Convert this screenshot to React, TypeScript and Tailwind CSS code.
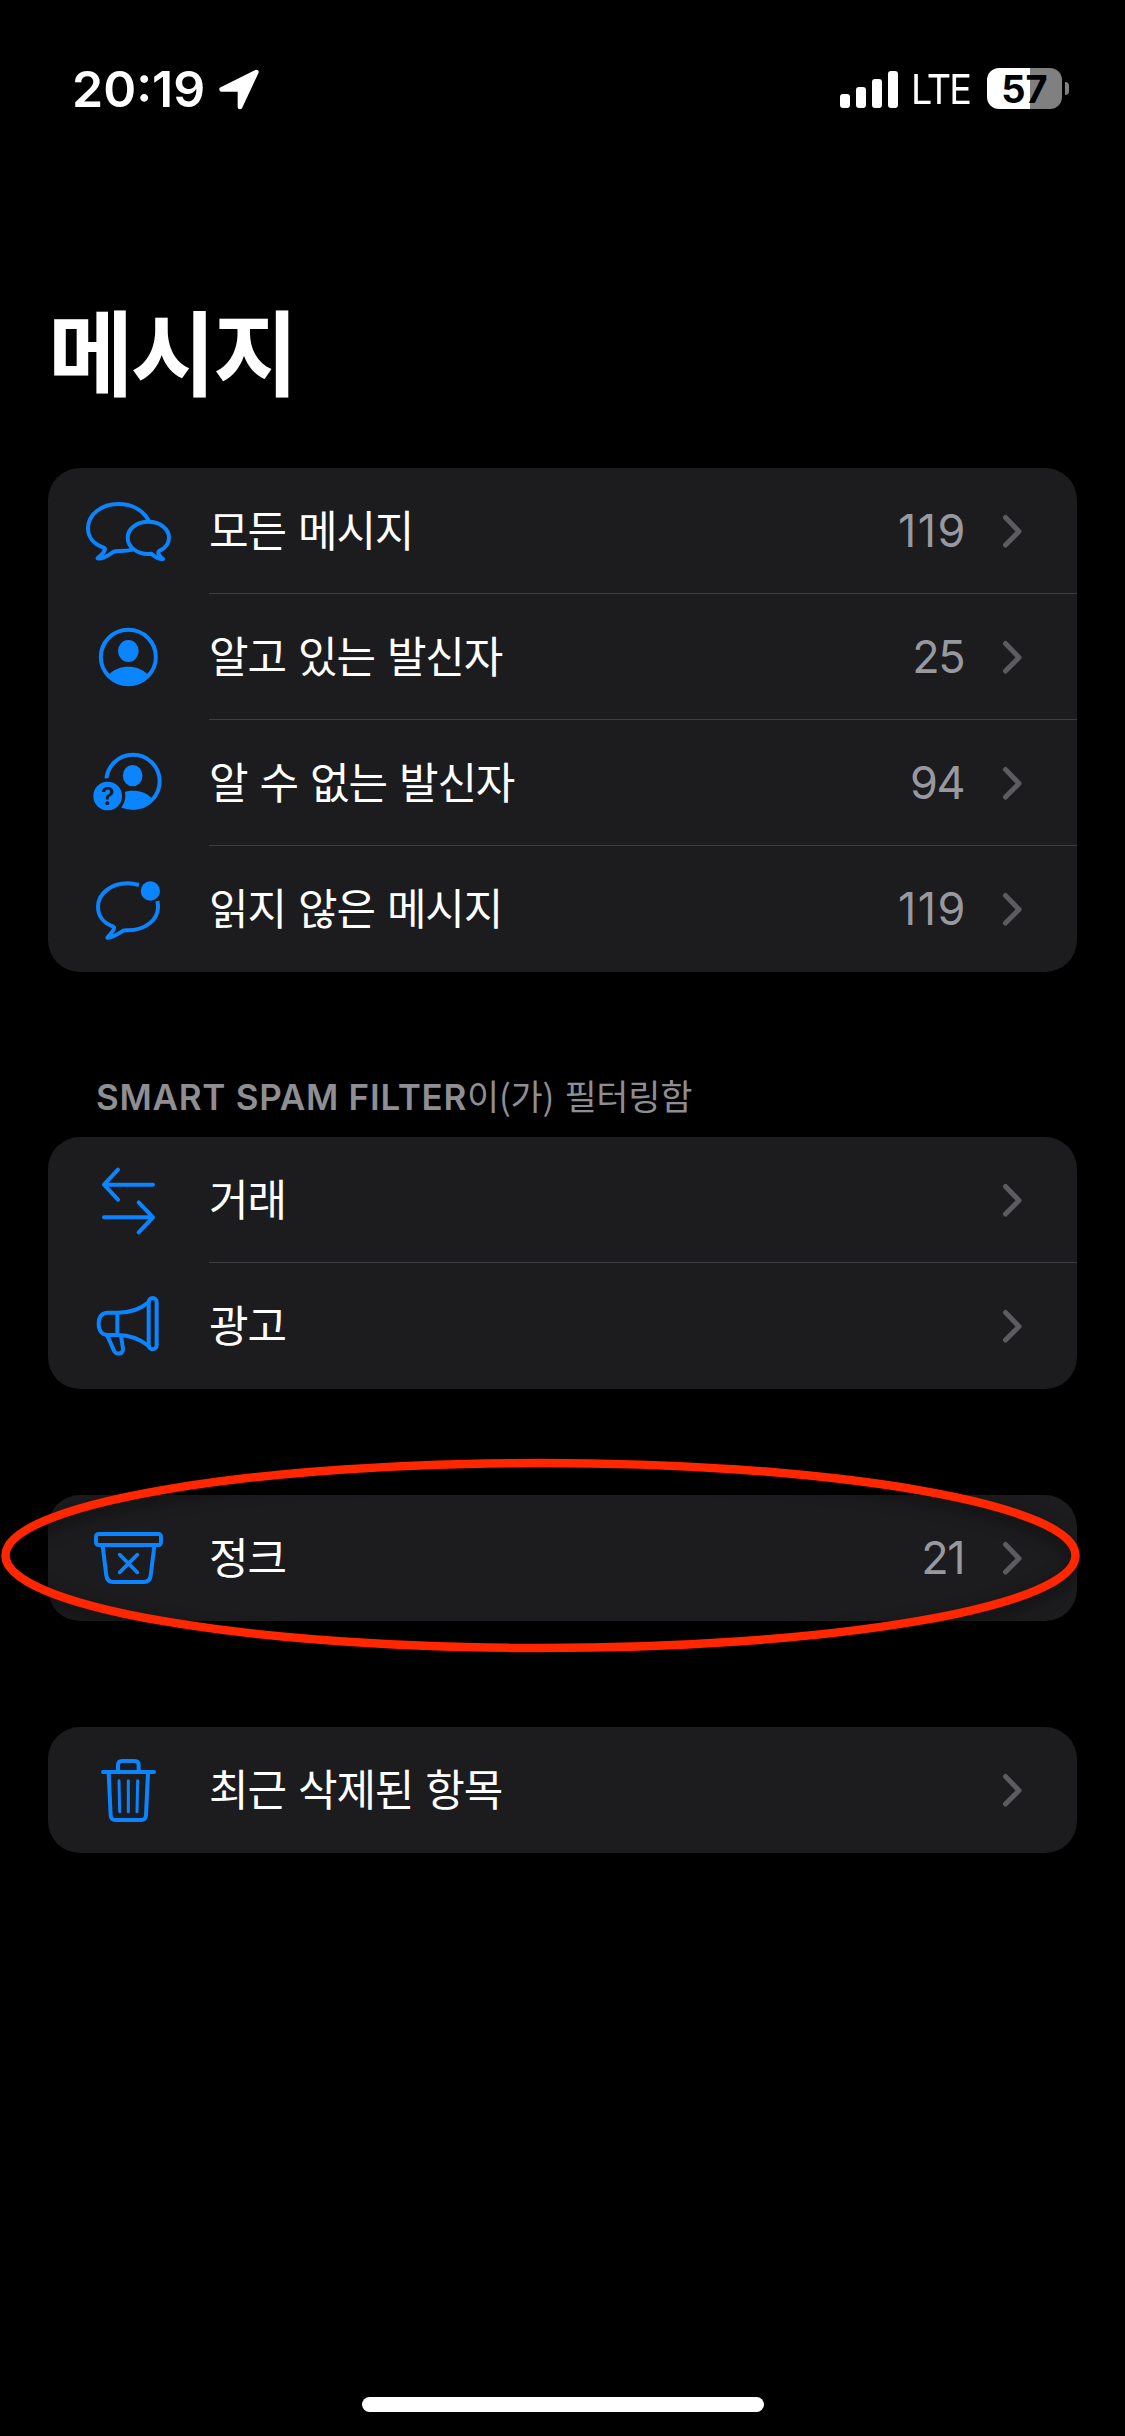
import React from 'react';

const MessagesIcon = () => (
  <g>
    <path d="M250 156C233 126 200 108 160 108C109 108 69 140 69 181C69 207 86 229 116 239C124 242 118 250 111 259L98 271C112 275 136 258 146 251Q150 249 160 249Q182 250 203 245" />
    <path d="M258 257C268 265 282 275 294 273Q288 269 281 258C278 253 280 251 284 248C301 240 312 226 312 209C312 182 284 161 250 161S188 182 188 209S216 258 250 258Z" />
  </g>
);

const KnownIcon = () => (
  <g>
    <ellipse cx="190" cy="189" rx="82.5" ry="81.5" />
    <ellipse cx="190" cy="171" rx="31" ry="33" fill="currentColor" stroke="none" />
    <path d="M133 240C147 226 167 218 190 218S233 226 247 240C235 258 215 271 190 271S145 258 133 240Z" fill="currentColor" stroke="none" />
  </g>
);

const UnknownIcon = () => (
  <g>
    <circle cx="204" cy="184" r="80" />
    <ellipse cx="203" cy="167" rx="29.5" ry="32" fill="currentColor" stroke="none" />
    <path d="M150 233C164 219 182 212 204 212S245 219 259 234C247 254 228 266 204 266S162 254 150 233Z" fill="currentColor" stroke="none" />
    <circle cx="128" cy="228" r="53" fill="#1c1c1e" stroke="none" />
    <circle cx="128" cy="228" r="43" fill="currentColor" stroke="none" />
    <text x="129" y="255" textAnchor="middle" fontSize="74" fontWeight="600" fontFamily="Inter, sans-serif" fill="#1c1c1e" stroke="none">?</text>
  </g>
);

const UnreadIcon = () => (
  <g>
    <path strokeLinecap="butt" d="M222 117C211 114 200 112 189 112C138 112 99 143 99 183C99 209 115 231 143 241C150 244 147 250 142 257L127 275C142 276 163 262 175 254Q180 252 189 253C240 253 279 222 279 183Q279 174 277 165" />
    <circle cx="256" cy="135" r="29" fill="currentColor" stroke="none" />
  </g>
);

const ArrowsIcon = () => (
  <path d="M117 143H264M159 98L117 143L159 188M264 241H117M221 196L264 241L221 286" />
);

const AdsIcon = () => (
  <g>
    <rect x="251" y="105" width="24" height="154" rx="12" />
    <path d="M251 118C226 138 195 149 159 149H129C110 149 101 162 101 182S110 216 129 216H159C195 216 226 229 251 249M157 149V216" />
    <path d="M127 218L147 263C151 276 176 275 174 257L168 219" />
  </g>
);

const JunkIcon = () => (
  <g>
    <rect x="93" y="117" width="195" height="33" rx="8" />
    <path d="M113 152L124 242Q127 261 144 261H237Q254 261 257 242L268 152" />
    <path d="M164 179L217 232M217 179L164 232" strokeWidth="11" />
  </g>
);

const TrashIcon = () => (
  <g>
    <path d="M114 135H267M159 132V114Q159 102 171 102H209Q221 102 221 114V132" />
    <path d="M131 138L137 265Q138 279 151 279H229Q242 279 243 265L249 138" />
    <path d="M162 161L164 254M190 161V254M218 161L216 254" strokeWidth="9" />
  </g>
);

interface RowProps {
  icon: React.ReactNode;
  label: string;
  count?: number;
  last?: boolean;
}

const countTracking = (count: number) =>
  String(count).startsWith('11') ? 'tracking-[1.5px] mr-[-4px]' : 'tracking-[-1.5px] mr-[-1px]';

const Row = ({ icon, label, count, last }: RowProps) => (
  <div className="flex h-[126px] pl-[17px]">
    <svg
      className="size-[126px] shrink-0 text-[#0a84ff]"
      viewBox="0 0 378 378"
      fill="none"
      stroke="currentColor"
      strokeWidth="12"
      strokeLinecap="round"
      strokeLinejoin="round"
    >
      {icon}
    </svg>
    <div className={`ml-[18px] flex flex-1 items-center border-b pr-[54px] ${last ? 'border-transparent' : 'border-[#3d3d41]'}`}>
      <span className="flex-1 pb-[4px] text-[43px] leading-none tracking-[-1.1px] [word-spacing:3.5px]">{label}</span>
      {count !== undefined && (
        <span className={`pb-px font-[Inter] text-[45px] leading-none text-[#98989f] ${countTracking(count)}`}>{count}</span>
      )}
      <svg className="ml-[36px] h-[36px] w-[24px] shrink-0" viewBox="0 0 24 36" fill="none" stroke="#5b5b60" strokeWidth="5" strokeLinecap="round" strokeLinejoin="round">
        <path d="M6.5 4.5L20 18.5L6.5 32" />
      </svg>
    </div>
  </div>
);

const Card = ({ children }: { children: React.ReactNode }) => (
  <section className="mx-[48px] overflow-hidden rounded-[32px] bg-[#1c1c1e]">{children}</section>
);

const StatusBar = () => (
  <header className="flex h-[177px] items-center pr-[56px] pl-[72px]">
    <span className="font-[Inter] text-[50px] leading-none font-semibold">20:19</span>
    <svg className="ml-[13px] size-[42px]" viewBox="0 0 126 126" fill="#fff" stroke="#fff" strokeWidth="14" strokeLinejoin="round">
      <path d="M115 12L11 64H66V117Z" />
    </svg>
    <div className="ml-auto flex items-center">
      <div className="flex h-[38px] items-end gap-[6px]">
        <div className="h-[14px] w-[10px] rounded-[3px] bg-white" />
        <div className="h-[21px] w-[10px] rounded-[3px] bg-white" />
        <div className="h-[29px] w-[10px] rounded-[3px] bg-white" />
        <div className="h-[37px] w-[10px] rounded-[3px] bg-white" />
      </div>
      <span className="ml-[13px] w-[76px] origin-left scale-x-[0.92] pt-[2px] font-[Inter] text-[41px] leading-none tracking-[-2px]">LTE</span>
      <div className="flex h-[41px] w-[75px] items-center justify-center rounded-[12px] bg-[linear-gradient(to_right,#fff_43px,#808080_43px)] font-[Inter] text-[38px] leading-none font-bold text-black">
        57
      </div>
      <div className="ml-[3px] h-[13px] w-[4px] rounded-r-full bg-[#808080]" />
    </div>
  </header>
);

const App: React.FC = () => (
  <div className="relative flex h-[2436px] w-[1125px] flex-col overflow-hidden bg-black font-['Noto_Sans_CJK_KR',sans-serif] text-white">
    <StatusBar />
    <h1 className="mt-[118px] mb-[66px] ml-[48px] h-[107px] text-[93px] leading-[107px] font-bold tracking-[-3px]">메시지</h1>

    <Card>
      <Row icon={<MessagesIcon />} label="모든 메시지" count={119} />
      <Row icon={<KnownIcon />} label="알고 있는 발신자" count={25} />
      <Row icon={<UnknownIcon />} label="알 수 없는 발신자" count={94} />
      <Row icon={<UnreadIcon />} label="읽지 않은 메시지" count={119} last />
    </Card>

    <h2 className="mt-[98px] mb-[17px] ml-[96px] h-[50px] text-[35px] leading-[50px] tracking-[-0.3px] whitespace-nowrap text-[#8e8e93] [word-spacing:3px]">
      <span className="font-[Inter] font-semibold tracking-[0.75px] [word-spacing:0px]">SMART SPAM FILTER</span>이(가) 필터링함
    </h2>
    <Card>
      <Row icon={<ArrowsIcon />} label="거래" />
      <Row icon={<AdsIcon />} label="광고" last />
    </Card>

    <div className="relative mt-[106px]">
      <Card>
        <Row icon={<JunkIcon />} label="정크" count={21} last />
      </Card>
      {/* red marker around the junk row */}
      <svg className="absolute top-[-55px] left-0 h-[240px] w-[1125px] [filter:drop-shadow(0_6px_8px_rgba(0,0,0,0.5))]" viewBox="0 0 1125 240" fill="none">
        <ellipse cx="540.5" cy="115.5" rx="535" ry="92.5" stroke="#ff2600" strokeWidth="8.5" />
      </svg>
    </div>

    <div className="mt-[106px]">
      <Card>
        <Row icon={<TrashIcon />} label="최근 삭제된 항목" last />
      </Card>
    </div>

    <div className="mt-auto mb-[24px] h-[15px] w-[402px] self-center rounded-full bg-white" />
  </div>
);

export default App;
